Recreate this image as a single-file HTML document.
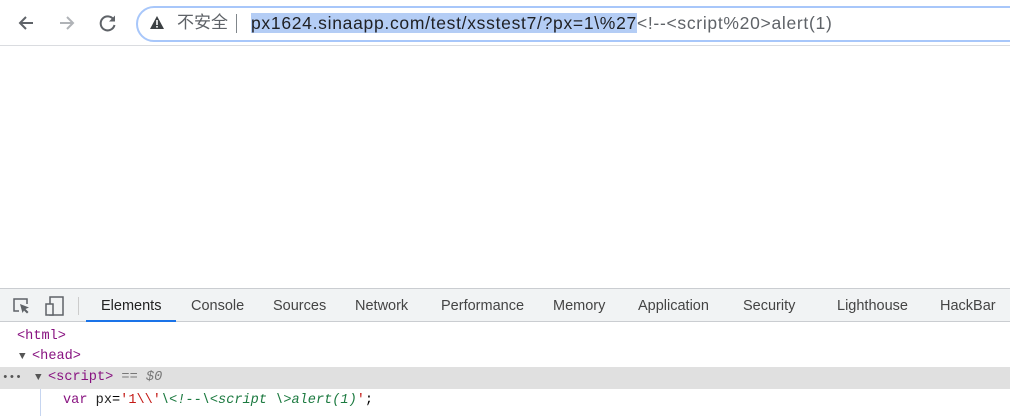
<!DOCTYPE html>
<html><head><meta charset="utf-8"><style>
*{margin:0;padding:0;box-sizing:border-box}
body{width:1010px;height:416px;overflow:hidden;background:#fff;font-family:"Liberation Sans","Noto Sans CJK SC",sans-serif;position:relative}
.top{position:absolute;left:0;top:0;width:1010px;height:46px;background:#fff;border-bottom:1px solid #dadce0}
.addr{position:absolute;left:136px;top:6px;width:900px;height:36px;border:2px solid #a8c7fa;border-radius:18px;background:#fff}
.url{position:absolute;left:251px;top:11px;font-size:17.5px;line-height:24px;color:#202124;white-space:nowrap;letter-spacing:0.7px}
.sel{background:#b4cdf5}
.grey{color:#5f6368}
.dt{position:absolute;left:0;top:288px;width:1010px;height:34px;background:#f1f3f4;border-top:1px solid #cacdd1;border-bottom:1px solid #cacdd1}
.tab{position:absolute;top:9px;font-size:14.5px;color:#444}
.code{position:absolute;font-family:"Liberation Mono",monospace;font-size:13.6px;white-space:pre;line-height:16px}
.tag{color:#881280}.br{color:#a8a8a8}
.tri{display:inline-block;width:13px;font-size:11px;color:#555}
</style></head><body>
<div class="top">
<svg style="position:absolute;left:17px;top:14px" width="18" height="18" viewBox="0 0 18 18"><path d="M16 9H3M9 3L3 9l6 6" stroke="#5f6368" stroke-width="2" fill="none"/></svg>
<svg style="position:absolute;left:58px;top:14px" width="18" height="18" viewBox="0 0 18 18"><path d="M2 9h13M9 3l6 6-6 6" stroke="#b0b3b7" stroke-width="2" fill="none"/></svg>
<svg style="position:absolute;left:98px;top:13px" width="20" height="20" viewBox="0 0 20 20"><path d="M15.5 6.5A7 7 0 1 0 16.5 12" stroke="#5f6368" stroke-width="2" fill="none"/><path d="M17 2.5v6h-6z" fill="#5f6368"/></svg>
<div class="addr"></div>
<svg style="position:absolute;left:150px;top:16px" width="14" height="13" viewBox="0 0 14 13"><path d="M7 0L14 13H0z" fill="#3c4043"/><rect x="6.2" y="4" width="1.6" height="5" fill="#fff"/><rect x="6.2" y="10" width="1.6" height="1.6" fill="#fff"/></svg>
<div style="position:absolute;left:177px;top:11px;font-size:17px;line-height:24px;color:#5f6368">不安全</div>
<div style="position:absolute;left:236px;top:14px;width:1px;height:19px;background:#80868b"></div>
<div class="url"><span class="sel">px1624.sinaapp.com/test/xsstest7/?px=1\%27</span><span class="grey">&lt;!--&lt;script%20&gt;alert(1)</span></div>
</div>
<div class="dt">
<svg style="position:absolute;left:12px;top:8px" width="20" height="18" viewBox="0 0 20 18"><path d="M7 14H2V2h13v5" stroke="#5f6368" stroke-width="1.5" fill="none"/><path d="M8 7l9 3.5-3.5 1.5 3 3-1.5 1.5-3-3L10.5 16z" fill="#5f6368"/></svg>
<svg style="position:absolute;left:44px;top:6px" width="22" height="22" viewBox="0 0 22 22"><rect x="6" y="2" width="13" height="18" stroke="#5f6368" stroke-width="1.5" fill="none"/><rect x="2" y="9" width="7" height="11" stroke="#5f6368" stroke-width="1.5" fill="#f1f3f4"/></svg>
<div style="position:absolute;left:78px;top:8px;width:1px;height:18px;background:#ccc"></div>
<div class="tab" style="left:101px;color:#222">Elements</div>
<div style="position:absolute;left:86px;top:31px;width:90px;height:2px;background:#1a73e8"></div>
<div class="tab" style="left:191px">Console</div>
<div class="tab" style="left:273px">Sources</div>
<div class="tab" style="left:355px">Network</div>
<div class="tab" style="left:441px">Performance</div>
<div class="tab" style="left:553px">Memory</div>
<div class="tab" style="left:638px">Application</div>
<div class="tab" style="left:743px">Security</div>
<div class="tab" style="left:837px">Lighthouse</div>
<div class="tab" style="left:940px">HackBar</div>
</div>
<div class="code" style="left:17px;top:329px"><span class="tag">&lt;html&gt;</span></div>
<div class="code" style="left:19px;top:349px"><span class="tri">▼</span><span class="tag">&lt;head&gt;</span></div>
<div style="position:absolute;left:0;top:367px;width:1010px;height:22px;background:#e0e0e0"></div>
<div class="code" style="left:2px;top:370px;color:#555"><span style="font-size:11px">•••</span></div>
<div class="code" style="left:35px;top:370px"><span class="tri">▼</span><span class="tag">&lt;script&gt;</span><span style="color:#777"> == <i>$0</i></span></div>
<div style="position:absolute;left:40px;top:389px;width:1px;height:27px;background:#c6d5f0"></div>
<div class="code" style="left:63px;top:393px"><span style="color:#881280">var</span> <span style="color:#222">px</span>=<span style="color:#c41a16">'1\\'</span><i style="color:#1c7a40">\&lt;!--\&lt;script \&gt;alert(1)</i><span style="color:#c41a16">'</span>;</div>
</body></html>
